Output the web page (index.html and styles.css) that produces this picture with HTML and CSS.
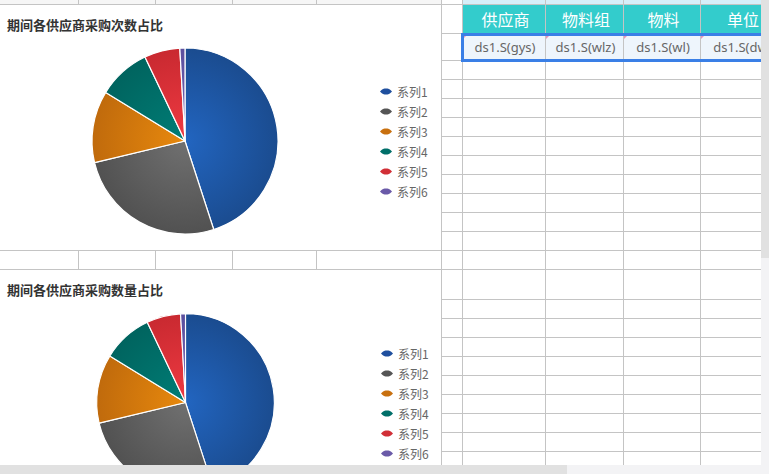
FILE: index.html
```html
<!DOCTYPE html>
<html lang="zh-CN">
<head>
    <meta charset="UTF-8">
    <title>采购报表设计</title>
    <link rel="stylesheet" href="styles.css">
</head>
<body>

<div class="app">
    <div class="main">
        <!-- Zona de gráficos -->
        <div class="left">
            <div class="strip strip-top"><span></span><span></span><span></span><span></span><span></span></div>

            <section class="chart">
                <h2 class="chart-title">期间各供应商采购次数占比</h2>
                <div class="chart-body">
                    <svg class="pie" viewBox="0 0 200 200">
                        <defs>
                            <radialGradient id="g1" gradientUnits="userSpaceOnUse" cx="100" cy="100" r="100">
                                <stop offset="0" stop-color="#2265c0"/><stop offset="1" stop-color="#1a4a8c"/>
                            </radialGradient>
                            <radialGradient id="g2" gradientUnits="userSpaceOnUse" cx="100" cy="100" r="100">
                                <stop offset="0" stop-color="#707070"/><stop offset="1" stop-color="#4f4f4f"/>
                            </radialGradient>
                            <radialGradient id="g3" gradientUnits="userSpaceOnUse" cx="100" cy="100" r="100">
                                <stop offset="0" stop-color="#e8890d"/><stop offset="1" stop-color="#bd680c"/>
                            </radialGradient>
                            <radialGradient id="g4" gradientUnits="userSpaceOnUse" cx="100" cy="100" r="100">
                                <stop offset="0" stop-color="#007d76"/><stop offset="1" stop-color="#00625d"/>
                            </radialGradient>
                            <radialGradient id="g5" gradientUnits="userSpaceOnUse" cx="100" cy="100" r="100">
                                <stop offset="0" stop-color="#ef3a42"/><stop offset="1" stop-color="#c6282f"/>
                            </radialGradient>
                            <radialGradient id="g6" gradientUnits="userSpaceOnUse" cx="100" cy="100" r="100">
                                <stop offset="0" stop-color="#7064b8"/><stop offset="1" stop-color="#5a4e9c"/>
                            </radialGradient>
                        </defs>
                        <g class="slices">
                            <path fill="url(#g1)" d="M100 100 L100 7 A93 93 0 0 1 128.74 188.45 Z"/>
                            <path fill="url(#g2)" d="M100 100 L128.74 188.45 A93 93 0 0 1 9.53 121.55 Z"/>
                            <path fill="url(#g3)" d="M100 100 L9.53 121.55 A93 93 0 0 1 20.71 51.41 Z"/>
                            <path fill="url(#g4)" d="M100 100 L20.71 51.41 A93 93 0 0 1 59.96 16.06 Z"/>
                            <path fill="url(#g5)" d="M100 100 L59.96 16.06 A93 93 0 0 1 94.81 7.15 Z"/>
                            <path fill="url(#g6)" d="M100 100 L94.81 7.15 A93 93 0 0 1 100 7 Z"/>
                        </g>
                    </svg>
                    <ul class="legend">
                        <li><svg class="mark" viewBox="0 0 12 7"><path fill="#1f4f9e" d="M0 3.5C2 1 4 .5 6 .5S10 1 12 3.5C10 6 8 6.5 6 6.5S2 6 0 3.5Z"/></svg>系列1</li>
                        <li><svg class="mark" viewBox="0 0 12 7"><path fill="#555" d="M0 3.5C2 1 4 .5 6 .5S10 1 12 3.5C10 6 8 6.5 6 6.5S2 6 0 3.5Z"/></svg>系列2</li>
                        <li><svg class="mark" viewBox="0 0 12 7"><path fill="#c8700f" d="M0 3.5C2 1 4 .5 6 .5S10 1 12 3.5C10 6 8 6.5 6 6.5S2 6 0 3.5Z"/></svg>系列3</li>
                        <li><svg class="mark" viewBox="0 0 12 7"><path fill="#006f69" d="M0 3.5C2 1 4 .5 6 .5S10 1 12 3.5C10 6 8 6.5 6 6.5S2 6 0 3.5Z"/></svg>系列4</li>
                        <li><svg class="mark" viewBox="0 0 12 7"><path fill="#d12f37" d="M0 3.5C2 1 4 .5 6 .5S10 1 12 3.5C10 6 8 6.5 6 6.5S2 6 0 3.5Z"/></svg>系列5</li>
                        <li><svg class="mark" viewBox="0 0 12 7"><path fill="#6a5aa8" d="M0 3.5C2 1 4 .5 6 .5S10 1 12 3.5C10 6 8 6.5 6 6.5S2 6 0 3.5Z"/></svg>系列6</li>
                    </ul>
                </div>
            </section>

            <div class="strip"><span></span><span></span><span></span><span></span><span></span></div>

            <section class="chart chart-small">
                <h2 class="chart-title">期间各供应商采购数量占比</h2>
                <div class="chart-body">
                    <svg class="pie" viewBox="0 0 200 200">
                        <g class="slices">
                            <path fill="url(#g1)" d="M100 100 L100 7 A93 93 0 0 1 128.74 188.45 Z"/>
                            <path fill="url(#g2)" d="M100 100 L128.74 188.45 A93 93 0 0 1 9.53 121.55 Z"/>
                            <path fill="url(#g3)" d="M100 100 L9.53 121.55 A93 93 0 0 1 20.71 51.41 Z"/>
                            <path fill="url(#g4)" d="M100 100 L20.71 51.41 A93 93 0 0 1 59.96 16.06 Z"/>
                            <path fill="url(#g5)" d="M100 100 L59.96 16.06 A93 93 0 0 1 94.81 7.15 Z"/>
                            <path fill="url(#g6)" d="M100 100 L94.81 7.15 A93 93 0 0 1 100 7 Z"/>
                        </g>
                    </svg>
                    <ul class="legend">
                        <li><svg class="mark" viewBox="0 0 12 7"><path fill="#1f4f9e" d="M0 3.5C2 1 4 .5 6 .5S10 1 12 3.5C10 6 8 6.5 6 6.5S2 6 0 3.5Z"/></svg>系列1</li>
                        <li><svg class="mark" viewBox="0 0 12 7"><path fill="#555" d="M0 3.5C2 1 4 .5 6 .5S10 1 12 3.5C10 6 8 6.5 6 6.5S2 6 0 3.5Z"/></svg>系列2</li>
                        <li><svg class="mark" viewBox="0 0 12 7"><path fill="#c8700f" d="M0 3.5C2 1 4 .5 6 .5S10 1 12 3.5C10 6 8 6.5 6 6.5S2 6 0 3.5Z"/></svg>系列3</li>
                        <li><svg class="mark" viewBox="0 0 12 7"><path fill="#006f69" d="M0 3.5C2 1 4 .5 6 .5S10 1 12 3.5C10 6 8 6.5 6 6.5S2 6 0 3.5Z"/></svg>系列4</li>
                        <li><svg class="mark" viewBox="0 0 12 7"><path fill="#d12f37" d="M0 3.5C2 1 4 .5 6 .5S10 1 12 3.5C10 6 8 6.5 6 6.5S2 6 0 3.5Z"/></svg>系列5</li>
                        <li><svg class="mark" viewBox="0 0 12 7"><path fill="#6a5aa8" d="M0 3.5C2 1 4 .5 6 .5S10 1 12 3.5C10 6 8 6.5 6 6.5S2 6 0 3.5Z"/></svg>系列6</li>
                    </ul>
                </div>
            </section>
        </div>

        <!-- Hoja de datos -->
        <div class="right">
            <div class="grid" id="grid">
                <div></div><div class="cell-top"></div><div class="cell-top"></div><div class="cell-top"></div><div class="cell-top"></div>

                <div></div>
                <div class="head">供应商</div>
                <div class="head">物料组</div>
                <div class="head">物料</div>
                <div class="head">单位</div>

                <div></div>
                <div class="data">ds1.S(gys)</div>
                <div class="data">ds1.S(wlz)</div>
                <div class="data">ds1.S(wl)</div>
                <div class="data">ds1.S(dw)</div>

                <div class="sel"></div>
            </div>
        </div>

        <div class="vscroll"><div class="thumb"></div></div>
    </div>

    <div class="hscroll"><div class="thumb"></div><div class="corner"></div></div>
</div>

<script>
    // Filas vacías de la hoja
    const grid = document.getElementById('grid');
    for (let i = 0; i < 22 * 5; i++) {
        grid.appendChild(document.createElement('div'));
    }
</script>

</body>
</html>
```

FILE: styles.css
```css
/* Estilos generales */
body {
    margin: 0;
    font-family: "Noto Sans", "Noto Sans CJK SC", sans-serif;
    background-color: #fff;
}

.app {
    width: 769px;
    height: 474px;
    display: flex;
    flex-direction: column;
    overflow: hidden;
}

.main {
    display: flex;
    height: 465px;
    overflow: hidden;
}

/* Zona de gráficos */
.left {
    width: 441px;
    flex-shrink: 0;
    border-right: 1px solid #c4c4c4;
    display: grid;
    grid-template-rows: 4px 245px 18px 1fr;
    row-gap: 1px;
    background-color: #c4c4c4;
}

.strip {
    display: grid;
    grid-template-columns: 78px 76px 76px 83px 1fr;
    column-gap: 1px;
}

.strip span {
    background-color: #fff;
}

.strip-top span {
    background-color: #f6f6f6;
}

.chart {
    background-color: #fff;
    overflow: hidden;
}

.chart-title {
    margin: 0;
    padding: 12px 7px 0;
    font-family: "Noto Sans CJK SC", sans-serif;
    font-size: 13px;
    line-height: 16px;
    font-weight: bold;
    color: #333;
}

.chart-body {
    display: flex;
    align-items: flex-start;
    margin-top: 8px;
}

.pie {
    flex-shrink: 0;
    width: 200px;
    height: 200px;
    margin-left: 85px;
}

.slices path {
    stroke: #fff;
    stroke-width: 1.2;
    stroke-linejoin: round;
}

.legend {
    list-style: none;
    margin: 40px 0 0 95px;
    padding: 0;
}

.legend li {
    display: flex;
    align-items: center;
    gap: 5px;
    height: 20px;
    font-family: "Noto Sans CJK SC", sans-serif;
    font-size: 12px;
    color: #666;
}

.mark {
    width: 12px;
    height: 7px;
}

.chart-small .chart-body {
    margin-top: 9px;
}

.chart-small .pie {
    width: 191px;
    height: 191px;
    margin-left: 90px;
}

.chart-small .legend {
    margin: 36px 0 0 100px;
}

/* Hoja de datos */
.right {
    flex: 1;
    overflow: hidden;
}

.grid {
    position: relative;
    width: max-content;
    display: grid;
    grid-template-columns: 20px 82px 77px 76px 81px;
    grid-template-rows: 4px 28px 26px repeat(11, 18px) 29px;
    grid-auto-rows: 18px;
    gap: 1px;
    background-color: #c4c4c4;
}

.grid > div {
    background-color: #fff;
}

.grid > .cell-top {
    background-color: #d6eff9;
}

.grid > .head {
    background-color: #33cccc;
    color: #fff;
    font-family: "Noto Sans CJK SC", sans-serif;
    font-size: 16px;
    display: flex;
    align-items: center;
    justify-content: center;
    padding-left: 3px;
}

.grid > .data {
    position: relative;
    background-color: #eef5fc;
    color: #666;
    font-size: 13px;
    display: flex;
    align-items: center;
    justify-content: center;
    padding-left: 2px;
}

.data::before {
    content: "";
    position: absolute;
    top: 1px;
    left: 0;
    border-left: 4px solid #e493bb;
    border-bottom: 4px solid transparent;
}

/* Selección */
.grid > .sel {
    position: absolute;
    grid-row: 3 / 4;
    grid-column: 2 / 6;
    inset: -1px -1px -2px -2px;
    border: 3px solid #3a7fe6;
    background: transparent;
}

/* Barras de desplazamiento */
.vscroll {
    width: 8px;
    flex-shrink: 0;
    background-color: #f3f3f5;
}

.vscroll .thumb {
    height: 258px;
    background-color: #e1e1e1;
}

.hscroll {
    height: 9px;
    display: flex;
    background-color: #f3f3f5;
}

.hscroll .thumb {
    width: 567px;
    background-color: #e1e1e1;
}

.hscroll .corner {
    margin-left: auto;
    width: 8px;
}
```
